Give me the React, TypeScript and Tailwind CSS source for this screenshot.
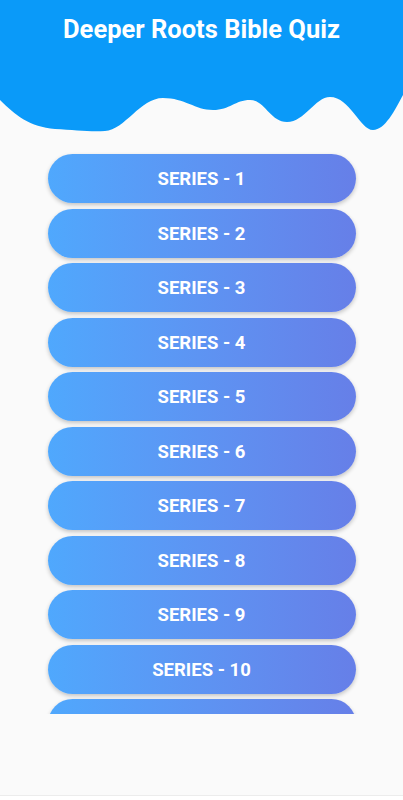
const series = Array.from({ length: 11 }, (_, i) => i + 1);

function Wave() {
  return (
    <svg viewBox="0 0 403 47" className="block w-[403px] h-[47px]" preserveAspectRatio="none">
      <path
        fill="#0a9af9"
        d="M0,0 L0,15 C15,30 30,42 55,44 C75,45 90,47 105,46 C125,45 140,13 163,13 C185,13 195,25 213,25 C230,25 235,15 250,15 C265,15 270,37 287,37 C305,37 315,12 330,12 C350,12 360,45 373,45 C385,45 395,25 403,10 L403,0 Z"
      />
    </svg>
  );
}

export default function App() {
  return (
    <div className="w-[403px] h-[800px] bg-white font-['Roboto',sans-serif] overflow-hidden">
      <div className="h-[796px] bg-[#fafafa] border-b border-[#ececec]">
        {/* Header */}
        <div className="bg-[#0a9af9] h-[85px] pt-[14px]">
          <h1 className="text-center text-white text-[25.5px] leading-[30px] font-bold">
            Deeper Roots Bible Quiz
          </h1>
        </div>
        <Wave />

        {/* Series list */}
        <div className="h-[582px] overflow-hidden pt-[22px]">
          <div className="flex flex-col gap-[5.5px] items-center">
            {series.map((n) => (
              <button
                key={n}
                className="w-[308px] h-[49px] shrink-0 rounded-full bg-gradient-to-r from-[#4fa8fd] to-[#667fe8] shadow-[0_2px_4px_rgba(0,0,0,0.22)] flex items-center justify-center pt-[3px] text-white text-[18.5px] font-bold"
              >
                SERIES - {n}
              </button>
            ))}
          </div>
        </div>
      </div>
    </div>
  );
}
